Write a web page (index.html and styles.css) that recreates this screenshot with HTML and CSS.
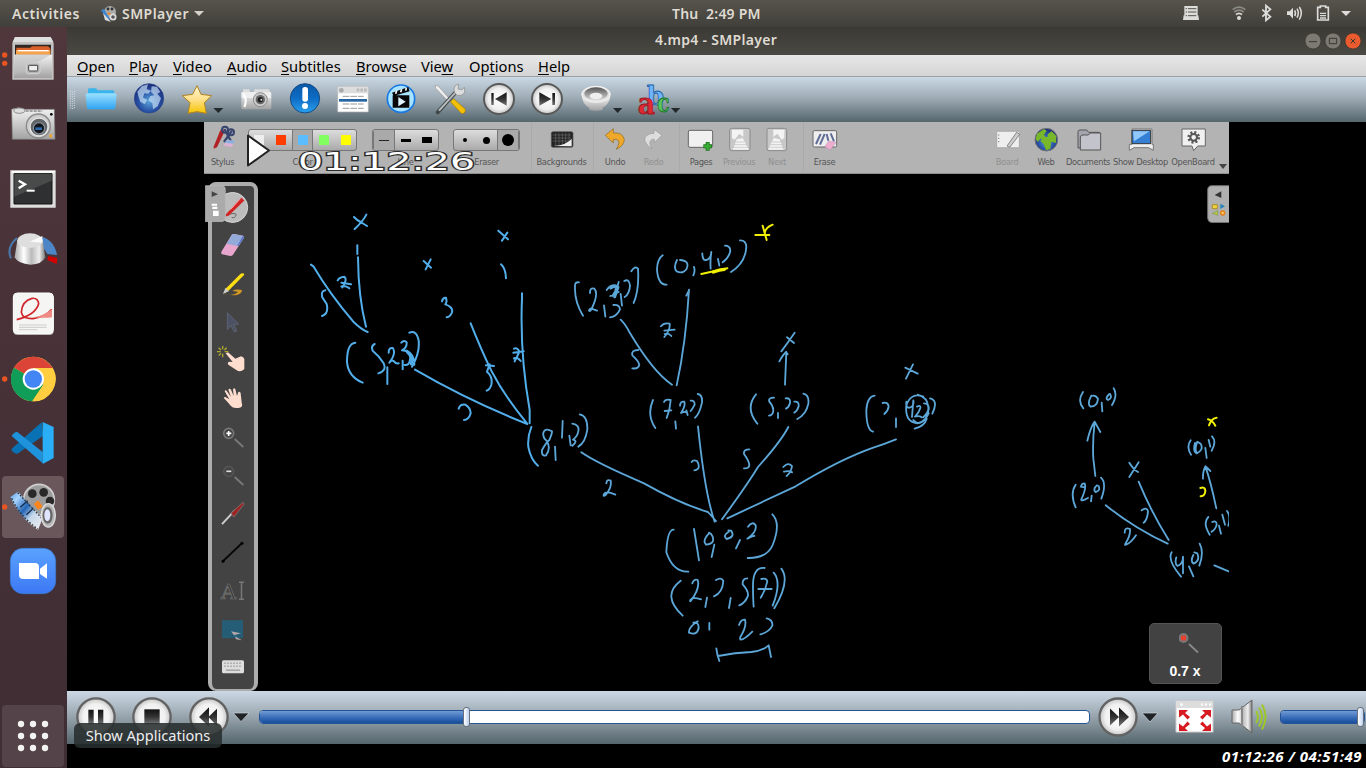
FILE: index.html
```html
<!DOCTYPE html>
<html lang="en">
<head>
<meta charset="utf-8">
<title>4.mp4 - SMPlayer</title>
<link rel="stylesheet" href="styles.css">
</head>
<body>
<svg class="defs" width="0" height="0">
  <defs>
    <linearGradient id="silver" x1="0" y1="0" x2="0" y2="1"><stop offset="0" stop-color="#f4f4f4"/><stop offset="1" stop-color="#a2a2a2"/></linearGradient>
    <linearGradient id="metal" x1="0" y1="0" x2="1" y2="0"><stop offset="0" stop-color="#aaa"/><stop offset=".3" stop-color="#fff"/><stop offset=".55" stop-color="#bbb"/><stop offset=".8" stop-color="#eee"/><stop offset="1" stop-color="#777"/></linearGradient>
    <linearGradient id="dark" x1="0" y1="0" x2="0" y2="1"><stop offset="0" stop-color="#111"/><stop offset=".5" stop-color="#333"/><stop offset="1" stop-color="#777"/></linearGradient>
    <linearGradient id="folder" x1="0" y1="0" x2="0" y2="1"><stop offset="0" stop-color="#9ce0ff"/><stop offset="1" stop-color="#2ea3f2"/></linearGradient>
    <linearGradient id="star" x1="0" y1="0" x2="0" y2="1"><stop offset="0" stop-color="#fff6d2"/><stop offset=".5" stop-color="#ffe08a"/><stop offset="1" stop-color="#f5c400"/></linearGradient>
    <radialGradient id="globe" cx=".5" cy=".6" r=".55"><stop offset="0" stop-color="#5ba4dc"/><stop offset=".6" stop-color="#2b56a8"/><stop offset="1" stop-color="#1c2f7c"/></radialGradient>
    <linearGradient id="info" x1="0" y1="0" x2="0" y2="1"><stop offset="0" stop-color="#0a59a8"/><stop offset=".5" stop-color="#0d6cc4"/><stop offset="1" stop-color="#2aa0ee"/></linearGradient>
    <radialGradient id="button"><stop offset="0" stop-color="#fff"/><stop offset=".7" stop-color="#f0f0f0"/><stop offset="1" stop-color="#c4c4c4"/></radialGradient>
    <linearGradient id="zoomapp" x1="0" y1="0" x2="0" y2="1"><stop offset="0" stop-color="#5aa2ff"/><stop offset="1" stop-color="#3c78f5"/></linearGradient>
    <linearGradient id="film" x1="0" y1="0" x2="1" y2="1"><stop offset="0" stop-color="#5a9de0"/><stop offset=".2" stop-color="#a8d4ff"/><stop offset=".45" stop-color="#2465b5"/><stop offset=".65" stop-color="#c5d8ea"/><stop offset="1" stop-color="#f0f0f0"/></linearGradient>
    <linearGradient id="cone" x1="0" y1="0" x2="0" y2="1"><stop offset="0" stop-color="#555"/><stop offset="1" stop-color="#d8d8d8"/></linearGradient>
  </defs>
</svg>

<header class="topbar">
  <span class="activities">Activities</span>
  <svg class="app-glyph" width="18" height="18" viewBox="0 0 18 18"><circle cx="10" cy="7" r="6" fill="#aaa"/><circle cx="8" cy="4" r="1.4" fill="#333"/><circle cx="12" cy="4" r="1.4" fill="#333"/><path d="M1 5l3-1 6 10-2 2z" fill="#3d86cf"/><path d="M3 8l2 7 6 2z" fill="#ddd"/><circle cx="13" cy="12" r="3.5" fill="#ddd"/><circle cx="13" cy="12" r="1.8" fill="#555"/><path d="M8 7l3 1-1 2-3-1z" fill="#e48a3a"/></svg>
  <span class="appname">SMPlayer</span>
  <svg width="10" height="6" viewBox="0 0 10 6"><path d="M0 0h10L5 5z" fill="#d3d1cc"/></svg>
  <span class="clock">Thu&nbsp; 2:49 PM</span>
  <svg class="tray" width="186" height="27" viewBox="540 0 558 81">
    <g transform="translate(300 0)" fill="#dcdcda">
      <path d="M253 18h40v28h-40zM251 46h44l2 14h-48z"/>
      <path d="M257 26h4M264 26h25M257 36h4M264 36h25M257 47h4M264 47h25" stroke="#55524b" stroke-width="3" fill="none"/>
      <circle cx="417" cy="54" r="6"/>
      <path d="M408 44q9-8 18 0" fill="none" stroke="#dcdcda" stroke-width="5"/>
      <path d="M403 36q14-11 28 0M398 29q19-15 38 0" fill="none" stroke="#8d8b86" stroke-width="5"/>
      <path d="M487 29l24 21-13 11V17l13 11-24 22" fill="none" stroke="#dcdcda" stroke-width="5.500"/>
      <path d="M561 34h8l10-11v33l-10-11h-8z"/>
      <path d="M584 31q5 9 0 17M591 26q8 13 0 27M598 21q12 18 0 38" fill="none" stroke="#dcdcda" stroke-width="4.500"/>
      <path d="M653 22h8v-4h16v4h8v38h-32z" fill="none" stroke="#dcdcda" stroke-width="5"/>
      <path d="M660 40h18M660 47h18M660 54h18" stroke="#dcdcda" stroke-width="4"/>
      <path d="M723 33h30l-15 15z"/>
    </g>
  </svg>
</header>

<div class="desktop">
<nav class="dock">
  <svg class="dock-item" viewBox="0 6 201 192">
    <circle cx="14" cy="90" r="8" fill="#e95420"/><circle cx="14" cy="115" r="8" fill="#e95420"/>
    <path d="M45 36h107l9 18v110H37V54z" fill="#c2c2c2"/><path d="M45 36h107l8 15H38z" fill="#dedede"/>
    <path d="M45 59h108v32H45z" fill="#2d2623"/><path d="M49 68h42l5-4h48l7 6v20H49z" fill="#d9602a"/><path d="M48 75h103v16H48z" fill="#f4a24c"/><path d="M54 75h92v4H54z" fill="#fff"/>
    <path d="M42 89h114v70H42z" fill="url(#silver)"/><path d="M43 88h112L43 150z" fill="#bbb" opacity=".55"/>
    <rect x="79" y="114" width="41" height="32" rx="7" fill="#b6b6b6" stroke="#d5d5d5" stroke-width="3"/><rect x="86" y="121" width="27" height="17" rx="2" fill="#eee" stroke="#444" stroke-width="3"/>
  </svg>
  <svg class="dock-item" viewBox="0 198 201 192">
    <path d="M35 253q20-9 40 0h88l2 90H37z" fill="url(#silver)" stroke="#777" stroke-width="2"/>
    <ellipse cx="58" cy="257" rx="17" ry="8" fill="#ddd" stroke="#888" stroke-width="3"/><path d="M77 258h50" stroke="#555" stroke-width="3" stroke-dasharray="9 3"/>
    <circle cx="115" cy="303" r="36" fill="#ccc" stroke="#8a8a8a" stroke-width="4"/><circle cx="117" cy="306" r="27" fill="#5f6469" stroke="#e5e5e5" stroke-width="4"/><circle cx="117" cy="310" r="17" fill="#11151c" stroke="#858b92" stroke-width="4"/><path d="M106 307h20v8h-20z" fill="#2d69ad"/><circle cx="154" cy="268" r="4"/><path d="M148 328h8v9h-8z" fill="#eca72d"/>
  </svg>
  <svg class="dock-item" viewBox="0 390 201 192">
    <path d="M31 436h136v112H31z" fill="#ddd"/><path d="M35 438h129v5H35z" fill="#fff"/><path d="M42 446h114v91H42z" fill="#2e3031" stroke="#111" stroke-width="3"/><path d="M43 447h112v20L43 515z" fill="#484b4a"/><path d="M56 467l19 11-19 12" stroke="#fff" stroke-width="7" fill="none"/><path d="M80 497h24" stroke="#fff" stroke-width="6"/>
  </svg>
  <svg class="dock-item" viewBox="0 582 201 192">
    <path d="M51 639q-33 28-18 61" fill="none" stroke="#4b79ad" stroke-width="6"/><path d="M125 635q38 10 46 55l-29-3-15-24z" fill="#4d86c7"/><path d="M145 693l27 6-2 18-28-12z" fill="#d40000"/>
    <path d="M52 645l-8 52q10 20 48 22 34-1 44-22l-8-52z" fill="url(#metal)"/><ellipse cx="90" cy="647" rx="38" ry="22" fill="#dedede"/><path d="M89 650l38-17v20z" fill="#fafafa"/>
  </svg>
  <svg class="dock-item" viewBox="0 774 201 192">
    <rect x="40" y="807" width="121" height="123" rx="12" fill="#aaa"/><rect x="40" y="804" width="120" height="122" rx="12" fill="#f5f5f3" stroke="#fff" stroke-width="3"/>
    <path d="M50 884q57-15 66-48-2-18-20-16-30 8-32 42 4 20 35 19 40-6 56-28" fill="none" stroke="#d0262b" stroke-width="5"/><path d="M99 877q30-3 57-24v24q-20 3-57 0z" fill="#f08a85"/><path d="M57 900h83M57 907h83M57 914h55" stroke="#ccc" stroke-width="3"/>
  </svg>
  <svg class="dock-item" viewBox="0 966 201 192">
    <circle cx="14" cy="1062" r="8" fill="#e95420"/>
    <circle cx="100" cy="1062" r="67" fill="#fcc934"/><path d="M100 1062L42 1028A67 67 0 0 1 158 1030H100z" fill="#db4437"/><path d="M100 1062L42 1028A67 67 0 0 0 97 1129l33-50z" fill="#0f9d58"/><path d="M100 1029h58a67 67 0 0 1-61 100l33-50z" fill="#ffcd40"/><circle cx="100" cy="1062" r="32" fill="#fff"/><circle cx="100" cy="1062" r="26" fill="#4285f4"/>
  </svg>
  <svg class="dock-item" viewBox="0 63 201 192">
    <path d="M35 176l90-79 5 40-78 54q-6 2-17-9z" fill="#0872b4"/><path d="M35 138q9-14 17-12l76 60v34z" fill="#1e93dc"/><path d="M128 96l33 15v93l-33 18z" fill="#2aaef5"/>
  </svg>
  <svg class="dock-item" viewBox="0 255 201 192">
    <rect x="6" y="258" width="186" height="186" rx="12" fill="#6a575c"/><circle cx="14" cy="351" r="8" fill="#e95420"/>
    <circle cx="117" cy="329" r="46" fill="#9c9c9c" stroke="#d0d0d0" stroke-width="5"/><circle cx="97" cy="311" r="13" fill="#292929"/><circle cx="131" cy="307" r="13" fill="#292929"/><circle cx="150" cy="333" r="13" fill="#292929"/>
    <path d="M31 321l23-16 74 80-14 35q-56-37-83-99z" fill="url(#film)"/><path d="M35 325q26 55 78 92M53 308l72 76" fill="none" stroke="#333" stroke-width="4" stroke-dasharray="5 5"/><path d="M61 352l22-20M79 374l21-19" stroke="#152c4b" stroke-width="4"/><path d="M101 342l14-11 13 19-14 9z" fill="#ff851d"/>
    <ellipse cx="145" cy="376" rx="21" ry="35" fill="#b5b5b5" stroke="#ddd" stroke-width="4"/><ellipse cx="143" cy="376" rx="15" ry="25" fill="#666"/><ellipse cx="142" cy="376" rx="9" ry="18" fill="#dfe5ff"/>
  </svg>
  <svg class="dock-item" viewBox="0 447 201 192">
    <rect x="31" y="475" width="136" height="136" rx="38" fill="url(#zoomapp)" stroke="#397bd4" stroke-width="2"/><path d="M57 519h48q12 0 12 12v36H70q-13 0-13-12zM120 536l21-16v46l-21-14z" fill="#fff"/>
  </svg>
  <svg class="dock-item apps" viewBox="0 939 201 195">
    <rect x="6" y="945" width="186" height="186" rx="12" fill="#544449"/>
    <path d="M63 1002h.1M99 1002h.1M135 1002h.1M63 1038h.1M99 1038h.1M135 1038h.1M63 1074h.1M99 1074h.1M135 1074h.1" stroke="#f3f3f2" stroke-width="19" stroke-linecap="round"/>
  </svg>
</nav>

<main class="window">
  <div class="titlebar"><span class="title">4.mp4 - SMPlayer</span>
    <svg class="winbtns" width="60" height="28" viewBox="606 81 180 84">
      <circle cx="639" cy="123" r="24" fill="#7c7a72" stroke="#33322e" stroke-width="2"/><circle cx="699" cy="123" r="24" fill="#7c7a72" stroke="#33322e" stroke-width="2"/><circle cx="759" cy="123" r="24" fill="#ec5b2d" stroke="#33322e" stroke-width="2"/>
      <path d="M627 125h24M688 115h22v16h-22zM752 116l14 14M766 116l-14 14" fill="none" stroke="#393832" stroke-width="3"/>
    </svg>
  </div>
  <div class="menubar">
    <span class="m1"><u>O</u>pen</span><span class="m2"><u>P</u>lay</span><span class="m3"><u>V</u>ideo</span><span class="m3"><u>A</u>udio</span><span class="m4"><u>S</u>ubtitles</span><span class="m5"><u>B</u>rowse</span><span class="m6">Vie<u>w</u></span><span class="m7">Op<u>t</u>ions</span><span><u>H</u>elp</span>
  </div>
  <div class="toolbar">
    <svg width="58" height="45" viewBox="201 231 174 135">
      <path d="M211 273v52M217 275v52M223 273v52" stroke="#dce6ec" stroke-width="3" stroke-dasharray="3 4"/>
      <path d="M264 278v-9q0-4 5-4h17q5 0 6 6h46q5 0 5 5v14h-79z" fill="#39b4ec"/><path d="M257 286q0-6 6-6h81q6 0 6 6l-4 38q-1 4-6 4h-73q-5 0-6-4z" fill="url(#folder)"/>
    </svg>
    <svg width="48" height="45" viewBox="375 231 144 135">
      <circle cx="447" cy="295" r="44" fill="url(#globe)" stroke="#26468f" stroke-width="2"/><path d="M412 275l13-16 19-6-4 14 13 5-8 9-12-1-4 13 13 6-8 14-13-8-6-17zM455 259l16 1 10 16-9 5 11 14-10 24-14 9-2-18-12-9 6-13 12-2-10-10z" fill="#c6def4" opacity=".7"/>
    </svg>
    <svg width="59" height="45" viewBox="519 231 177 135">
      <path d="M591 257l12 26 32 4-22 21 6 32-28-5-27 5 6-32-23-21 31-4z" fill="url(#star)" stroke="#b18320" stroke-width="3" stroke-linejoin="round"/><path d="M640 324h30l-15 15z" fill="#23282b"/>
    </svg>
    <svg width="49" height="45" viewBox="696 231 147 135">
      <rect x="724" y="276" width="90" height="52" rx="5" fill="url(#silver)"/><path d="M725 276h88v18h-88z" fill="#eee"/><path d="M729 268h20v8h-20zM764 268h43l3 9h-49z" fill="#ddd"/><path d="M730 281q13 19 3 40" fill="none" stroke="#fff" stroke-width="6"/><circle cx="781" cy="299" r="21" fill="#ccc" stroke="#8b8b8b" stroke-width="3"/><circle cx="781" cy="299" r="14" fill="#686868"/><circle cx="781" cy="299" r="8" fill="#1d1d1f"/><circle cx="784" cy="299" r="3" fill="#ddd"/>
    </svg>
    <svg width="48" height="45" viewBox="843 231 144 135"><circle cx="915" cy="295" r="44" fill="url(#info)" stroke="#164b82" stroke-width="3"/><rect x="907" y="261" width="17" height="44" rx="8" fill="#fff"/><circle cx="915" cy="318" r="9" fill="#fff"/></svg>
    <svg width="48" height="45" viewBox="987 231 144 135"><path d="M1013 260h92v76h-92z" fill="#fff" stroke="#aaa" stroke-width="2"/><path d="M1013 260h92v20h-92z" fill="#ddd"/><circle cx="1024" cy="271" r="7" fill="#aaa"/><path d="M1070 270h8M1081 270h8M1092 270h8" stroke="#bbb" stroke-width="9"/><path d="M1017 301h84" stroke="#2665a3" stroke-width="8"/><path d="M1028 289h63M1028 312h63M1028 325h63" stroke="#999" stroke-width="3" stroke-dasharray="20 3"/></svg>
    <svg width="48" height="45" viewBox="1131 231 144 135"><circle cx="1203" cy="296" r="41" fill="#a8e4ff" stroke="#1878e4" stroke-width="5"/><path d="M1176 278l49-17 4 13-48 14zM1178 286h50v37h-50z" fill="#080808"/><path d="M1187 281l3-9M1202 277l3-9M1217 272l2-8" stroke="#fff" stroke-width="5"/><path d="M1195 291l22 14-22 14z" fill="#dff4ff"/></svg>
    <svg width="49" height="45" viewBox="1275 231 147 135"><path d="M1305 256l10 2 38 44-5 5-41-42z" fill="#eee" stroke="#999" stroke-width="2"/><path d="M1351 305l10-9 35 32q1 13-11 13z" fill="#f4bf08" stroke="#9e7a00" stroke-width="2"/><path d="M1313 337l52-58" stroke="#40484b" stroke-width="12" stroke-linecap="round"/><path d="M1317 332l49-54" stroke="#b9bdbf" stroke-width="6"/><path d="M1368 255l8-2-2 14 13 2 6-7q5 19-9 24-12 3-18-5-9-15 2-26z" fill="#ddd" stroke="#888" stroke-width="2"/></svg>
    <svg width="49" height="45" viewBox="1422 231 147 135"><circle cx="1497" cy="297" r="45" fill="url(#button)" stroke="#595959" stroke-width="6"/><path d="M1474 279h7v36h-7zM1485 297l35-20v40z" fill="url(#dark)"/></svg>
    <svg width="48" height="45" viewBox="1569 231 144 135"><circle cx="1641" cy="297" r="45" fill="url(#button)" stroke="#595959" stroke-width="6"/><path d="M1657 279h8v36h-8zM1654 297l-36-20v40z" fill="url(#dark)"/></svg>
    <svg width="59" height="45" viewBox="1713 231 177 135"><path d="M1746 288q2 27 22 35v6q20 6 40 0v-6q20-10 23-35z" fill="url(#silver)"/><ellipse cx="1788" cy="283" rx="43" ry="24" fill="#e4e4e4" stroke="#f4f4f4" stroke-width="3"/><ellipse cx="1788" cy="281" rx="35" ry="19" fill="url(#cone)"/><ellipse cx="1788" cy="288" rx="19" ry="10" fill="#eee"/><path d="M1839 324h28l-14 15z" fill="#23282b"/></svg>
    <svg class="abc" width="60" height="45" viewBox="1890 231 180 135"><text x="1940" y="314" font-size="80" textLength="52" lengthAdjust="spacingAndGlyphs" fill="#70b6ff" stroke="#205da7">b</text><text x="1913" y="341" font-size="92" textLength="52" lengthAdjust="spacingAndGlyphs" fill="#e22932" stroke="#981820">a</text><text x="1972" y="335" font-size="76" textLength="37" lengthAdjust="spacingAndGlyphs" fill="#59c861" stroke="#197329">c</text><path d="M2013 324h28l-14 15z" fill="#23282b"/></svg>
  </div>

  <section class="video">
    <div class="frame">
      <div class="ob-bar">
        <div class="ob-item stylus"><svg width="32" height="32" viewBox="20 18 96 96"><path d="M40 86l19-47q8-13 13 2L50 88l-10 4z" fill="#b21f25"/><path d="M72 33l23 42M95 38L71 72" stroke="#38456f" stroke-width="7"/><circle cx="74" cy="35" r="9" fill="none" stroke="#38456f" stroke-width="6"/><circle cx="92" cy="43" r="9" fill="none" stroke="#38456f" stroke-width="6"/><path d="M69 82l10-15 24 1-9 20z" fill="#dcb1d5"/><path d="M78 67l25 1-4 9-25-3z" fill="#87b1df"/></svg><span>Stylus</span></div>
        <div class="ob-item colors"><div class="swatches">
          <i class="w"></i><i class="r"></i><i class="b sel"></i><i class="g"></i><i class="y"></i></div><span>Color</span></div>
        <div class="ob-item lines"><div class="swatches"><i class="sel l1"></i><i class="l2"></i><i class="l3"></i></div><span>Line</span></div>
        <div class="ob-item erasers"><div class="swatches"><i class="e1"></i><i class="e2"></i><i class="sel e3"></i></div><span>Eraser</span></div>
        <div class="ob-item bg"><svg width="32" height="32" viewBox="1037 12 96 96"><rect x="1053" y="35" width="65" height="47" rx="5" fill="#242424" stroke="#555" stroke-width="2"/><path d="M1057 45h55M1057 54h55M1057 63h55M1066 39v38M1076 39v38M1086 39v38M1096 39v38M1106 39v38" stroke="#666" stroke-width="2"/><path d="M1059 78q42-4 55-22v23z" fill="#eee"/></svg><span>Backgrounds</span></div>
        <div class="ob-item undo"><svg width="32" height="32" viewBox="179 12 96 96"><path d="M198 46l24-20v13q28-3 33 20-1 18-24 29 13-22 4-28-5-4-13-1v10z" fill="#eea92b" stroke="#8c641e" stroke-width="2"/></svg><span>Undo</span></div>
        <div class="ob-item redo off"><svg width="32" height="32" viewBox="294 12 96 96"><path d="M366 46l-24-18v12q-29 1-28 21 4 15 23 26-13-19-4-26 4-5 10-3v10z" fill="#ddd" stroke="#999" stroke-width="2"/></svg><span>Redo</span></div>
        <div class="ob-item pages"><svg width="32" height="32" viewBox="438 12 96 96"><rect x="448" y="31" width="73" height="51" rx="5" fill="#f0f0f0" stroke="#666" stroke-width="3"/><path d="M506 66v26M493 79h26" stroke="#18731b" stroke-width="12"/><path d="M506 68v22M495 79h22" stroke="#38ac35" stroke-width="7"/></svg><span>Pages</span></div>
        <div class="ob-item prev off"><svg width="32" height="32" viewBox="551 12 96 96"><rect x="571" y="25" width="61" height="67" rx="6" fill="#c8c8c8" stroke="#8a8a8a" stroke-width="3"/><path d="M578 29h34v22l-12-10-14 18-8-5zM580 89l12-31 18-4 19 35z" fill="#f3f3f3"/><path d="M586 66h30M583 74h40M579 82h48" stroke="#bbb" stroke-width="2"/></svg><span>Previous</span></div>
        <div class="ob-item next off"><svg width="32" height="32" viewBox="669 12 96 96"><rect x="687" y="25" width="59" height="67" rx="6" fill="#c8c8c8" stroke="#8a8a8a" stroke-width="3"/><path d="M739 29h-33v22l12-10 13 18 8-5zM737 89l-12-31-18-4-17 35z" fill="#f3f3f3"/><path d="M732 66h-30M735 74h-39M738 82h-46" stroke="#bbb" stroke-width="2"/></svg><span>Next</span></div>
        <div class="ob-item erase"><svg width="32" height="32" viewBox="809 12 96 96"><rect x="821" y="32" width="71" height="49" rx="4" fill="#eee" stroke="#666" stroke-width="3"/><path d="M830 72l14-30M842 74l14-32M862 42l5 20M874 40l10 24" fill="none" stroke="#5f6d96" stroke-width="6"/><path d="M856 80l12-17 22 4-17 23z" fill="#ecadcf" stroke="#a87aa8"/></svg><span>Erase</span></div>
        <div class="ob-item board off"><svg width="32" height="32" viewBox="36 12 96 96"><rect x="53" y="34" width="68" height="49" rx="3" fill="#eee" stroke="#999" stroke-width="2"/><path d="M84 78l29-41 9 6-30 39zM57 45h4M57 55h4M57 65h4" fill="#ccc" stroke="#888" stroke-width="3"/></svg><span>Board</span></div>
        <div class="ob-item web"><svg width="32" height="32" viewBox="154 12 96 96"><circle cx="203" cy="59" r="34" fill="url(#globe)" stroke="#777" stroke-width="3"/><path d="M175 41l21-14 8 5-8 13 5 7-16 5-8 9-6-9zM207 43l12-9 14 14-1 21-14-4-3 22-13 4-7-19-10-9 9-12h13z" fill="#79b72a"/></svg><span>Web</span></div>
        <div class="ob-item docs"><svg width="32" height="32" viewBox="278 12 96 96"><path d="M296 84V35q0-5 6-5h20l6 7h32v45z" fill="#a5a5b0" stroke="#555" stroke-width="3"/><path d="M303 90V51q1-6 8-6h16l6-6h31v51z" fill="#c3c3cc" stroke="#555" stroke-width="3"/></svg><span>Documents</span></div>
        <div class="ob-item desk"><svg width="32" height="32" viewBox="437 12 96 96"><path d="M450 91V73h8V27h60v46h4v18l-14-8h-44z" fill="#eee" stroke="#777" stroke-width="3"/><path d="M458 31h56v40h-56z" fill="#347ed3" stroke="#333" stroke-width="3"/><path d="M461 34h50l-47 30z" fill="#91c7fb"/></svg><span>Show Desktop</span></div>
        <div class="ob-item open"><svg width="32" height="32" viewBox="593 12 96 96"><path d="M608 27h70v51h-23l-12 14-5-14h-30z" fill="#f0f0f0" stroke="#666" stroke-width="3"/><circle cx="643" cy="52" r="15" fill="none" stroke="#555" stroke-width="8" stroke-dasharray="6 5.780"/><circle cx="643" cy="52" r="10" fill="none" stroke="#555" stroke-width="6"/></svg><span>OpenBoard</span></div>
        <svg class="more" width="8" height="5" viewBox="0 0 8 5"><path d="M0 0h8L4 5z" fill="#444"/></svg>
        <i class="sep s1"></i><i class="sep s2"></i><i class="sep s3"></i><i class="sep s4"></i>
        <svg class="osd" width="234" height="48" viewBox="244 128 234 48"><path d="M248 135.500v30l21-15z" fill="#fff" stroke="#222" stroke-width="2" stroke-linejoin="round"/><text x="298" y="169.500" textLength="177" lengthAdjust="spacingAndGlyphs">01:12:26</text></svg>
      </div>
      <div class="board">
        <div class="palette">
          <svg viewBox="38 25 120 114"><circle cx="97" cy="83" r="45" fill="#bcbcbc" stroke="#d8d8d8" stroke-width="3"/><path d="M79 106q30-10 28 0t-13 7" fill="none" stroke="#666" stroke-width="3"/><path d="M76 104l47-50 9 8-47 46-9 2z" fill="#d32424"/><path d="M91 89l28-31" stroke="#ff9a9a" stroke-width="3"/></svg>
          <svg viewBox="38 139 120 115"><path d="M63 216l31-50q2-4 7-3l27 5q4 2 2 8l-32 49q-3 4-8 4l-25-5q-4-2-2-8z" fill="#e8a6cf"/><path d="M79 192l15-26q2-4 7-3l27 5q4 2 2 8l-16 24z" fill="#94aad9"/><path d="M114 199l16-23q2-6-2-8l-17 30z" fill="#5a72c8"/></svg>
          <svg viewBox="38 254 120 115"><path d="M75 326l46-46q10-4 11 3l-46 47-12 8z" fill="#ffdf10"/><path d="M68 341l7-18 11 9z" fill="#ccc"/><path d="M68 343q35 4 45-9l-17-2q10-7 29-3-1 13-19 16z" fill="#d39922"/></svg>
          <svg viewBox="38 369 120 115"><path d="M81 398l34 34-15 2 10 18-8 4-10-19-11 12z" fill="#4c5264" stroke="#666e80" stroke-width="2"/></svg>
          <svg viewBox="38 484 120 115"><path d="M67 499v10M67 522v11M50 516h11M73 516h11M55 504l7 7M79 504l-7 7M55 528l7-7" stroke="#b2ab31" stroke-width="4"/><path d="M76 521q7-5 12 1l17 15 17-7q12 4 10 14v24q-12 12-24 3l-24-16q-5-8 5-9l8 1z" fill="#ffded0"/></svg>
          <svg viewBox="38 599 120 115"><path d="M70 656q3-6 9-1l8 5-14-24q2-6 7 0l12 17-8-22q4-6 8 0l8 19-2-20q4-6 7 0l5 20 4-12q6-3 7 4l3 27q6 18-12 17-14 2-21-7-14-17-21-23z" fill="#ffded0"/></svg>
          <svg viewBox="38 714 120 115"><circle cx="85" cy="760" r="15" fill="#444" stroke="#777" stroke-width="5"/><path d="M78 760h15M85 753v15" stroke="#fff" stroke-width="5"/><path d="M103 777l26 24" stroke="#777" stroke-width="6"/></svg>
          <svg viewBox="38 714 120 115"><circle cx="85" cy="760" r="15" fill="#444" stroke="#555" stroke-width="5"/><path d="M78 760h15" stroke="#ddd" stroke-width="5"/><path d="M103 777l26 24" stroke="#777" stroke-width="6"/></svg>
          <svg viewBox="1 0 40 38"><path d="M10 30L23 16" stroke="#ccc" stroke-width="2"/><path d="M19 19L31 8l1 2-10 13z" fill="#a12425" stroke="#777" stroke-width=".8"/></svg>
          <svg viewBox="1 0 40 38"><path d="M11 28L30 10" stroke="#050505" stroke-width="2"/><circle cx="11" cy="28" r="1.500"/><circle cx="30" cy="10" r="1.500"/></svg>
          <svg class="ai" viewBox="1 0 40 38"><text x="9" y="28" textLength="15" lengthAdjust="spacingAndGlyphs">A</text><path d="M27 11h5M29.500 11v17M27 28h5" stroke="#777" stroke-width="1.500"/></svg>
          <svg viewBox="1 -2 40 38"><path d="M10 9h21v18H10z" fill="#245d75"/><path d="M19 20l10 2-7 2zM23 25l7 4-6-1z" fill="#b0a5a8"/></svg>
          <svg viewBox="1 -3 40 38"><rect x="10" y="9" width="22" height="13" rx="1.500" fill="#ddd"/><path d="M12 12h18M12 15h18" stroke="#999" stroke-width="1" stroke-dasharray="2 1"/><path d="M14 19h14" stroke="#888"/></svg>
        </div>
        <svg class="ltab" width="21" height="37" viewBox="14 15 63 111"><path d="M15 17h52q8 2 8 12v84q0 10-10 12H15z" fill="#aaa" stroke="#bbb" stroke-width="2"/><path d="M34 34l19 9-19 8z" fill="#444"/><path d="M34 71h16v6H34zM36 80h15v7H36zM38 92h17v16H38z" fill="#fff"/></svg>
        <svg class="ink" width="1025" height="517" viewBox="204 174 1025 517">
          <g transform="translate(200 180) scale(.33333)">
            <path d="M462 111q9 10 20 15l19 12M499 104q-10 20-35 43M472 196v26M474 232q1 120 24 208M333 254l8 6q48 81 119 165 25 24 43 31M413 301q5-10 20-11 10 8-6 32M424 308l29 5M424 319q12-4 24 6M376 331q-14 2-9 21l13 20q7 29-14 36M466 488q-25 2-25 57 3 45 47 63M524 492q-12 6-6 20 20 16 33 38 10 22-16 30M562 562v50M566 518q0-16 12-14 12 15-10 44 6-10 14-4 6 8 14 6M604 488q9-10 16-1 1 17-14 24 30 2 24 28-2 18-16 16M608 542v26M628 458q22-9 28 24 4 36-20 78M620 512q24 12 23 42M671 243l22 20M692 238l-15 30M895 152l29 26M922 158l-16 24M903 253q14 12 15 42M726 364q2-12 12-11 4 14-2 20 24 8 20 24-6 14-16 15M776 686q4-14 20-12 16 10 16 26-6 20-20 20M812 430q31 78 62 142 41 79 107 158M645 569q160 93 337 163M966 340v15q-7 166 23 335v40M858 556l24 2M869 553l-8 22q18 16 13 39-4 14-14 18M942 506q12-4 16 10l-14 28M942 535q9-6 20 8M940 518l31-4M994 741q-12 30-9 60 8 39 29 56"/>
            <path class="heavy" d="M622 516q18 14 12 36"/>
          </g>
          <g class="fine" transform="translate(540 210) scale(.33333)">
            <path d="M368 136q-16 11-17 42 3 47 29 46M411 150q-12 23-1 34 19 9 30-8 10-24-20-26M462 171q4 13-2 25M487 130q0 22 12 20 14-4 15-24-4 24-2 50M534 147l4 20M555 107q15 0 16 14-2 20-23 36M600 91q18-1 19 20-3 48-46 75M117 217q-13-2-12 12-2 46 24 88M150 249q-1-17 13-13 14 15-8 60-4 10-8 6 2-10 14-4l10 4M192 286l4 34M200 240q10-16 28-14 2 16-11 32M211 258l25-12M236 216l-12 46M220 285q18-2 20 13-10 22-30 24M242 252l4 35M253 213q15-8 17 14-2 26-16 34M274 184q11-18 20-8 4 65-13 103M242 329q13 12 26 37 72 121 128 158M447 239q-9 159-37 287M439 257l8-16M363 349q8-12 26-8 2 20-16 40M373 362l31-3M374 372q12-4 20 6M295 420q-22 0-18 16 18 16 21 28-2 14-21 11M764 368q-20 29-40 56M741 382l21 17M735 524l4-98M718 454q11-20 20-28l5 7M1096 473l37 18M1119 463l-21 43M339 570q-20 44 7 84M372 576q4-10 20-6-2 30-12 54M374 603l20-2M406 634l2 22M420 587q1-14 13-12 4 14-10 34 12-6 16-2M439 601l4 14M452 572q12-2 12 12-6 12-12 19M473 552q15 2 13 26-8 35-21 45M648 553q-34 41 4 88M702 563q-18 0-14 12 15 16 11 32-2 9-12 10M714 609v15M737 565q15-2 13 14-3 13-12 17M763 575q14-2 13 14-4 14-13 19M790 551q18 4 15 30-6 32-33 46M1004 557q-22 2-25 43 0 60 20 65M1028 579q16-4 18 10-2 14-13 23M1068 625v26M1099 575q-2 20 10 18 14-4 11-22-2 24-4 50M1131 590q12-6 10 4-4 14-16 26 12-4 20 2M1152 580q16 0 14 18-6 16-16 24M1150 560q-37-14-51 26-5 49 32 54 36-7 34-48-2-30-32-38M1120 630q23 25 46-20M1124 656q30-8 36-30M1170 565q26 6 7 46M36 664q-20-12-26 4-2 16 10 24 14 24-2 44-14 4-12-16 12-22 22-30 8-18 8-26M45 710l2 40M68 633l-2 50M88 677l4 29M97 641q22 4 18 22-2 16-16 26 16 4-2 18M119 613q24 4 23 45-6 40-27 52"/>
            <path d="M124 727q45 32 188 93 108 61 192 86l24 27M474 649q21 205 50 286M745 651q-22 43-91 120-31 51-108 157M1068 688q-37 15-66 24-103 36-235 117-69 32-205 96M199 820q2-14 13-8 4 20-14 42-10 8-6-2 6-10 34 2M455 756q5-8 16-3 8 12 4 22-6 6-12 6M628 718q-18 0-16 14 16 22 16 34-2 10-16 9M730 771q14-16 26-3-2 18-16 30M732 785q16-4 24 2M401 959q-19 0-22 68 20 60 66 58M462 957l15 94M507 970q-21 22-9 34 27-2 20-24-4-10-11-12M523 1004l-8 37M566 965q-19 12-6 22 27-7 13-25l-8-1M600 990l-12 25M624 950q13-18 23-4 4 20-25 40 26-12 20-8M697 913q27 26 1 92-17 40-75 39M422 1112q-59 45 6 105M457 1120q4-14 16-10 8 24-20 62-4 4-2-2 6-10 32-2M501 1163l-5 28M528 1110q16-10 22 3-2 35-28 46M572 1164l-5 30M622 1105q-15 0-14 18 18 20 16 34-8 22-26 29M674 1074q-35-4-35 52 0 40 2 64M664 1107q16-4 18 7-6 28-20 49M655 1137h40M701 1088q25 28-3 99M724 1076q28 36-21 119M473 1234q-28 18-26 34 24 10 29-14 0-20-16-16M508 1239v20M597 1245q6-18 18-16 6 20-14 52-2 8 2 8 10 0 34-24M680 1225q19 5 17 22-10 20-36 26"/>
            <path d="M529 1315q2 19 9 38M534 1338q52-10 100-12 33-3 52-20l7 35"/>
            <path class="heavy" d="M212 234q10-8 22-2l-10 28"/>
            <path class="yellow" d="M646 75h42M668 47l12 43M674 68q4-16 24-24M484 192l78-17"/>
            <path class="yellow fat" d="M520 186q20-7 33-8"/>
          </g>
          <g class="fine" transform="translate(1050 370) scale(.33333)">
            <path d="M99 66q-18 27 1 49M124 77q-14 26-2 33 20 0 22-24-8-12-20-8M155 98l2 26M178 72q-14 14-4 18 14-6 6-18M191 55q13 20-5 50M134 156q-7 61-4 110l6 52M112 212q10-42 22-57l17 31M77 344q-18 26 0 68M94 348q0-8 10-8 6 14-10 48-2 8 20-4M92 350l12 2M125 377l-2 17M137 350q-8 10 0 16 15-4 9-18l-6-2M153 323q18 16 1 63M238 278q12 20 26 28M266 277l-28 44M266 335q38 92 90 175M167 406q90 71 186 115M275 421q15-12 19 3-2 26-13 34M224 488q0-18 16-11 2 18-13 43-4 6 1 4 14-4 30-28M365 547q-14 22 28 73M379 562q-6 20 4 26 16-6 16-28 0 24 0 50M417 589l13 30M430 555q-10 20 1 26 20-10 11-31l-9-3M449 521q14 25-1 66M493 586l47 20M422 211q-14 20 1 43M435 219q-7 25 5 31 22-10 12-29l-10-6q-9 20-2 34M466 234l4 30M476 210l5 20M486 199q15 16-1 43M466 289q16 45 33 126M459 326q-1-25 8-37l14 14M475 441q-18 17 4 53M487 456q13-6 13 8-3 14-15 21M507 467l6 24M517 434l8 30M531 423q12 15 4 44"/>
            <path class="yellow" d="M474 148q14 4 22 19M500 143q-15 1-23 23M451 354q14-5 15 8 0 15-14 17"/>
          </g>
        </svg>
        <svg class="rtab" width="23" height="38" viewBox="680 193 69 114"><path d="M748 195h-53q-13 0-13 13v84q0 12 12 14h54z" fill="#b0b0b0" stroke="#6d6d6d" stroke-width="3"/><path d="M703 223l20-11v20z" fill="#333"/><path d="M696 252h15v12h-15z" fill="#efd33e" stroke="#997900" stroke-width="2"/><path d="M720 249l14 8-14 8z" fill="#2883b8"/><path d="M712 270v14l-16-6z" fill="#adc747" stroke="#677b19"/><circle cx="727" cy="277" r="6" fill="#f9c766" stroke="#e57f17" stroke-width="4"/></svg>
        <div class="zoombox"><svg width="30" height="30" viewBox="0 0 30 30"><circle cx="4.500" cy="10" r="5" fill="#777"/><path d="M2 7.500h5v5H2z" fill="#e8402f"/><path d="M10 16l9 8.500" stroke="#888" stroke-width="1.800"/></svg><span>0.7 x</span></div>
      </div>
    </div>
  </section>

  <div class="controls">
    <svg width="192" height="53" viewBox="201 18 576 159">
      <circle cx="288" cy="96" r="56" fill="url(#button)" stroke="#636363" stroke-width="7"/><path d="M265 74h16v44h-16zM294 74h16v44h-16z" fill="url(#dark)"/>
      <circle cx="456" cy="96" r="56" fill="url(#button)" stroke="#636363" stroke-width="7"/><path d="M433 73h46v45h-46z" fill="url(#dark)"/>
      <circle cx="627" cy="96" r="56" fill="url(#button)" stroke="#636363" stroke-width="7"/><path d="M597 96l30-29v58zM625 96l26-25v51z" fill="url(#dark)"/>
      <path d="M700 84h47l-24 26z" fill="#202326" stroke="#d0d9df" stroke-width="2"/>
    </svg>
    <div class="seek"><div class="fill" style="width:24.9%"></div><b style="left:24.500%"></b></div>
    <svg class="right-controls" width="184" height="53" viewBox="1094 691 184 53">
      <circle cx="1118" cy="717" r="18.500" fill="url(#button)" stroke="#636363" stroke-width="2.300"/><path d="M1129 717l-10-9.500v19zM1119 717l-9-8.500v17z" fill="url(#dark)"/><path d="M1142 713h16l-8 9z" fill="#202326" stroke="#d0d9df" stroke-width=".7"/>
      <path d="M1176 701h37v31h-37z" fill="#fff" stroke="#ccc"/><path d="M1176 701h37v7h-37z" fill="#ddd"/><path d="M1180 704.500h3M1201 704.500h2M1205 704.500h2M1209 704.500h2" stroke="#fff" stroke-width="2"/>
      <path d="M1179 710h9l-3 3 5 4-2.500 2.500-4.500-5-4 3zM1211 710h-9l3 3-5 4 2.500 2.500 4.500-5 4 3zM1179 731h9l-3-3 5-4-2.500-2.500-4.500 5-4-3zM1211 731h-9l3-3-5-4 2.500-2.500 4.500 5 4-3z" fill="#d71920"/>
      <path d="M1232 710h7l13-10v33l-13-10h-7z" fill="url(#metal)" stroke="#666"/><path d="M1242 706v21" stroke="#888" stroke-width="2"/><path d="M1256 711q4 6 0 12M1259 707.500q6 9 0 19M1262 704.500q7 12 0 25" fill="none" stroke="#9cc828" stroke-width="2"/>
    </svg>
    <div class="volume"><div class="fill"></div><b></b></div>
  </div>
  <footer class="status">01:12:26 / 04:51:49</footer>
</main>
</div>
<div class="tooltip">Show Applications</div>
</body>
</html>
```
FILE: styles.css
```css
* { box-sizing: border-box; }
body { margin: 0; width: 1366px; height: 768px; overflow: hidden; background: #000; font-family: "Noto Sans", sans-serif; display: flex; flex-direction: column; position: relative; }
svg { display: block; flex: none; }
.defs { position: absolute; }

.topbar { height: 27px; display: flex; align-items: center; padding-left: 12px; background: linear-gradient(#58544c, #403f3a); color: #dfdbd2; font-size: 14px; font-weight: 600; line-height: 26px; white-space: nowrap; flex: none; }
.activities { width: 88px; letter-spacing: .55px; }
.app-glyph { margin-right: 4px; }
.appname { width: 72px; letter-spacing: .45px; }
.clock { width: 96px; margin-left: 468px; letter-spacing: .2px; }
.tray { margin-left: auto; margin-right: 0; }

.desktop { display: flex; height: 741px; }
.dock { width: 67px; flex: none; display: flex; flex-direction: column; background: linear-gradient(#4f373c, #432f36 70%, #402e35); }
.dock-item { width: 67px; height: 64px; }
.dock-item.apps { height: 65px; margin-top: auto; }
.window { width: 1299px; display: flex; flex-direction: column; }
.titlebar { height: 28px; background: linear-gradient(#3a3934, #4b4944); display: flex; align-items: center; padding-left: 588px; color: #dfdbd2; font-size: 14px; font-weight: 600; letter-spacing: .3px; }
.title { width: 130px; white-space: nowrap; line-height: 26px; padding-bottom: 2px; }
.winbtns { margin-left: auto; margin-right: 4px; }
.menubar { height: 22px; padding-left: 10px; display: flex; font-size: 14.7px; line-height: 23px; color: #000; background: linear-gradient(#e8e8e8, #d4d4d4); border-bottom: 1px solid #9ba1a5; }
.menubar u { text-underline-offset: 2px; text-decoration-thickness: 1px; }
.m1 { width: 52px; } .m2 { width: 44px; } .m3 { width: 54px; } .m4 { width: 75px; } .m5 { width: 65px; } .m6 { width: 48px; } .m7 { width: 69px; }
.toolbar { height: 45px; display: flex; background: linear-gradient(#c9d8e4, #a0adb7 45%, #55666d); }
.abc text { font-family: "DejaVu Serif", serif; font-weight: 700; stroke-width: 2.5px; }

.video { height: 569px; background: #000; padding-left: 137px; }
.frame { width: 1025px; height: 569px; overflow: hidden; position: relative; }
.ob-bar { height: 52px; position: relative; display: flex; background: #b3b3b3; border-bottom: 1px solid #8d8d8d; }
.ob-item { height: 52px; display: flex; flex-direction: column; align-items: center; justify-content: flex-start; padding-top: 2px; font: 8.300px/13px "DejaVu Sans", sans-serif; letter-spacing: -.35px; color: #555; white-space: nowrap; flex: none; }
.ob-item.off { color: #909090; }
.stylus { width: 37px; } .colors { width: 123px; } .lines { width: 83px; } .erasers { width: 79px; }
.bg { width: 71px; } .undo { width: 36px; } .redo { width: 41px; } .pages { width: 54px; } .prev { width: 22px; } .next { width: 54px; } .erase { width: 41px; }
.ob-item.board { width: 30px; margin-left: 147px; }
.web { width: 48px; } .docs { width: 36px; } .desk { width: 69px; } .open { width: 36px; }
.swatches { height: 22px; margin: 5px 0; border: 1px solid #777; border-radius: 3px; display: flex; overflow: hidden; background: linear-gradient(#ddd, #aaa); }
.swatches i { width: 21.600px; display: flex; align-items: center; justify-content: center; }
.swatches i::before { content: ""; width: 10px; height: 10px; background: #eee; }
.swatches .sel { background: #a9a9a9; border: solid #777; border-width: 0 1px; }
.swatches .r::before { background: #ff3c00; } .swatches .b::before { background: #5bbcff; } .swatches .g::before { background: #82ff60; } .swatches .y::before { background: #ff0; }
.swatches .l1::before { height: 1px; background: #222; } .swatches .l2::before { height: 3px; background: #000; } .swatches .l3::before { height: 6px; background: #000; }
.swatches .e1::before, .swatches .e2::before, .swatches .e3::before { background: #000; border-radius: 50%; width: 4px; height: 4px; }
.swatches .e2::before { width: 7px; height: 7px; } .swatches .e3::before { width: 12px; height: 12px; }
.more { position: absolute; right: 2px; top: 42px; }
.sep { position: absolute; top: 1px; bottom: 1px; border-left: 1px dotted #a2a2a2; }
.s1 { left: 327px; } .s2 { left: 389px; } .s3 { left: 475px; } .s4 { left: 599px; }
.osd { position: absolute; left: 40px; top: 6px; }
.osd text { font-family: "DejaVu Sans", sans-serif; font-size: 25.500px; fill: #fff; stroke: #2c2c2c; stroke-width: 2.200px; paint-order: stroke; }
div.board:not(.ob-item) { position: relative; width: 1025px; height: 517px; background: #000; padding: 8px 0 0 4px; }
.palette { width: 50px; height: 509px; border: 4px solid #adadad; border-bottom-width: 2px; border-radius: 8px; background: #434343; padding-top: 2px; display: flex; flex-direction: column; align-items: center; }
.palette svg { width: 40px; height: 38.300px; }
.ai text { font: 20px "DejaVu Serif", serif; fill: #333; stroke: #777; stroke-width: .7px; }
.ltab { position: absolute; left: 1px; top: 11px; }
.ink { position: absolute; inset: 0; }
.ink path { fill: none; stroke: #52aeea; stroke-width: 6px; stroke-linecap: round; stroke-linejoin: round; }
.ink .fine path { stroke: #5ca6d8; stroke-width: 5.500px; }
.ink path.heavy, .ink .fine path.heavy { stroke-width: 9px; }
.ink .fine .yellow { stroke: #f0f000; stroke-width: 6px; }
.ink .fine .fat { stroke-width: 10px; }
.rtab { position: absolute; right: -1px; top: 11px; }
.zoombox { position: absolute; left: 945px; top: 449px; width: 73px; height: 61px; border: 1px solid #555; border-radius: 5px; background: #424242; display: flex; flex-direction: column; align-items: center; padding: 4px 1px 0 0; font: 700 14px/18px "Liberation Sans", sans-serif; color: #fff; }
.zoombox svg { margin-left: 18px; }
.zoombox span { padding-top: 4px; }

.controls { height: 53px; display: flex; align-items: center; background: linear-gradient(#ccd9e5, #9ca8b1 45%, #55666d); }
.seek { width: 831px; height: 14px; border: 1px solid #235496; border-radius: 4px; background: #fff; position: relative; margin-bottom: 2px; }
.fill { height: 100%; background: linear-gradient(#719bd4, #3469b5 60%, #184d9b); border-radius: 3px; }
.seek b, .volume b { position: absolute; top: -4px; width: 7px; height: 20px; border: 1px solid #66717d; border-radius: 3px; background: linear-gradient(90deg, #fff, #bcd1ef); }
.right-controls { margin-left: 4px; }
.volume { width: 85px; height: 14px; border: 1px solid #235496; border-radius: 4px; position: relative; margin: 0 0 2px 2px; }
.volume b { right: 0; }
.status { height: 24px; background: #000; color: #fff; font: italic 700 15px/24px "Noto Sans", sans-serif; letter-spacing: .5px; text-align: right; padding-right: 4px; }
.tooltip { position: absolute; left: 74px; top: 723px; width: 148px; height: 25px; border-radius: 6px; background: rgba(40, 45, 47, .88); color: #eee; font-size: 14.600px; line-height: 25px; text-align: center; }
```
